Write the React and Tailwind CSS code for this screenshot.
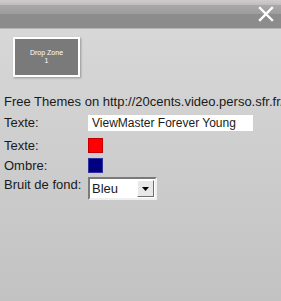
export default function App() {
    return (
        <div className="w-[281px] h-[301px] overflow-hidden flex flex-col bg-gradient-to-b from-[#dadada] to-[#c2c2c2] font-['Liberation_Sans',Arial,sans-serif] text-[#1a1a1a]">
            <div className="h-[29px] shrink-0 flex flex-col">
                <div className="h-[5px] bg-gradient-to-b from-[#d0cccc] to-[#bdbdbd]" />
                <div className="h-[9px] bg-gradient-to-b from-[#a9a9a9] to-[#9c9c9c]" />
                <div className="flex-1 bg-[#8c8c8c] flex justify-end">
                    <svg width="16" height="16" viewBox="0 0 16 16" className="mr-[7px] -mt-[8px]">
                        <path d="M2 2 L14 14 M14 2 L2 14" stroke="white" strokeWidth="2.4" strokeLinecap="square" />
                    </svg>
                </div>
                <div className="h-px bg-[#b4b4b4]" />
            </div>

            <div className="pl-[13px] pt-[8px]">
                <div className="w-[67px] h-[40px] border-2 border-white bg-[#7a7a7a] shadow-[1px_1px_2px_rgba(0,0,0,0.3)] flex flex-col items-center justify-center text-white text-[7px] leading-[8px]">
                    <span>Drop Zone</span>
                    <span>1</span>
                </div>
            </div>

            <div className="pl-[4px] pt-[17px] text-[13px] leading-[15px] whitespace-nowrap">
                Free Themes on http://20cents.video.perso.sfr.fr/
            </div>

            <div className="pl-[4px] pt-[6px] flex flex-col text-[13px]">
                <div className="flex items-center h-[16px]">
                    <span className="w-[84px]">Texte:</span>
                    <div className="w-[165px] h-[16px] bg-white pl-[4px] leading-[16px] text-[12px]">ViewMaster Forever Young</div>
                </div>
                <div className="flex items-center h-[15px] mt-[7px]">
                    <span className="w-[84px]">Texte:</span>
                    <div className="w-[15px] h-[15px] bg-[#ff0000] border border-[#c00000]" />
                </div>
                <div className="flex items-center h-[15px] mt-[5px]">
                    <span className="w-[84px]">Ombre:</span>
                    <div className="w-[15px] h-[15px] bg-[#000080] border border-[#3030a0]" />
                </div>
                <div className="flex items-start h-[23px] mt-[4px]">
                    <span className="w-[84px] leading-[16px]">Bruit de fond:</span>
                    <div className="w-[69px] h-[23px] bg-white border-2 border-t-[#7a7a7a] border-l-[#7a7a7a] border-b-[#f0f0f0] border-r-[#f0f0f0] flex items-center">
                        <span className="flex-1 pl-[2px] text-[13px]">Bleu</span>
                        <div className="w-[17px] h-[17px] mr-[1px] bg-[#e8e8e8] border border-t-white border-l-white border-b-[#707070] border-r-[#707070] flex items-center justify-center">
                            <svg width="7" height="4" viewBox="0 0 7 4">
                                <path d="M0 0 H7 L3.5 4 Z" fill="black" />
                            </svg>
                        </div>
                    </div>
                </div>
            </div>
        </div>
    )
}
